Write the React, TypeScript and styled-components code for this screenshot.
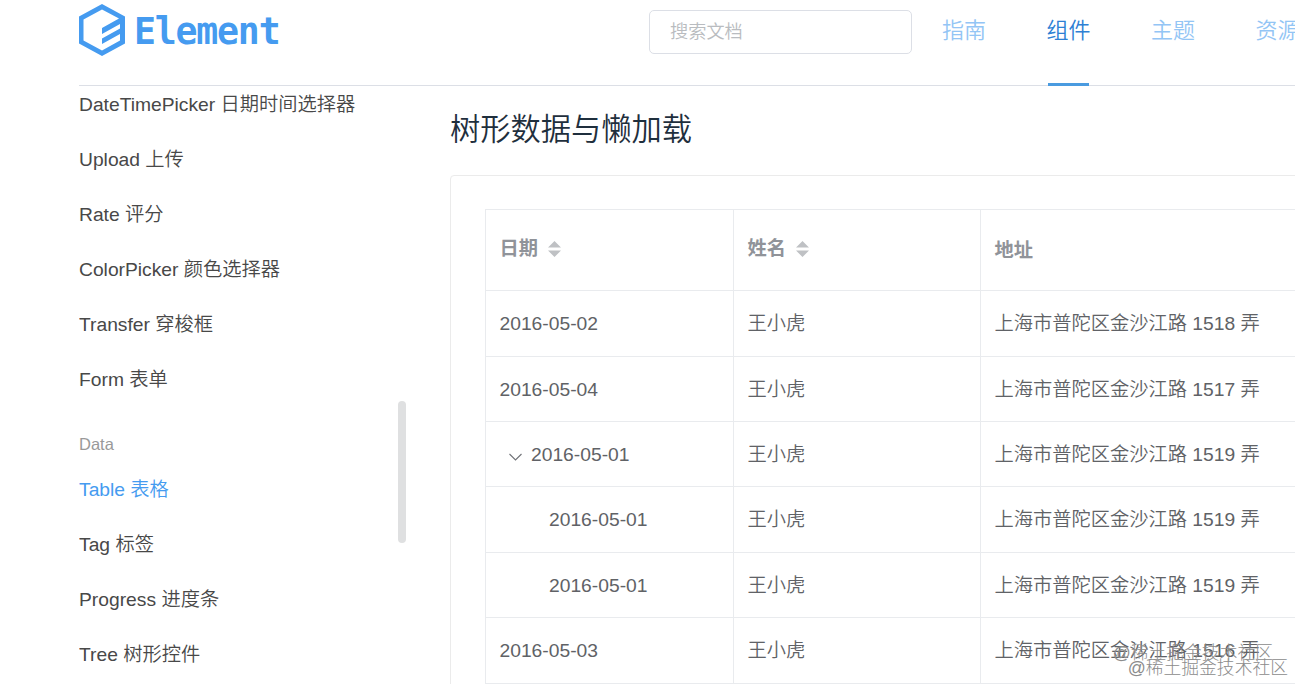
import React from "react";
import styled, { createGlobalStyle } from "styled-components";

const GlobalStyle = createGlobalStyle`
  * { box-sizing: border-box; }
  body {
    margin: 0;
    background: #fff;
    overflow: hidden;
    font-family: "Liberation Sans", "Noto Sans CJK SC", sans-serif;
    font-weight: 350;
    font-size: 19.25px;
    color: #606266;
  }
`;

const Page = styled.div`
  position: relative;
  width: 1295px;
  height: 684px;
  padding-left: 79px;
  overflow: hidden;
  display: flex;
  flex-direction: column;
`;

const Header = styled.header`
  flex: none;
  height: 86px;
  border-bottom: 1px solid #dcdfe6;
  display: flex;
  align-items: flex-start;
`;

const Logo = styled.div`
  display: flex;
  flex: none;
  width: 570px;
  padding-top: 4px;
`;

const LogoMark = styled.svg`
  flex: none;
  width: 46px;
  height: 52px;
  fill: #459bf0;
`;

const WordMark = styled.span`
  margin: 7px 0 0 9px;
  font: bold 36.5px/42px "DejaVu Sans Mono", monospace;
  letter-spacing: -1.2px;
  color: #459bf0;
`;

const Search = styled.input`
  flex: none;
  width: 263px;
  height: 44px;
  margin-top: 10px;
  padding: 0 20px;
  border: 1px solid #dcdfe6;
  border-radius: 5px;
  outline: none;
  font: inherit;
  font-size: 18.2px;
  &::placeholder { color: #b9bcc0; }
`;

const Nav = styled.nav`
  flex: none;
  display: flex;
  gap: 60.5px;
  margin-left: 30px;
  height: 86px;
`;

const NavItem = styled.a<{ $active?: boolean }>`
  position: relative;
  flex: none;
  width: 44px;
  font-size: 22px;
  line-height: 62px;
  white-space: nowrap;
  color: ${(p) => (p.$active ? "#2d80d4" : "#93c5f5")};
  &::after {
    content: "";
    display: ${(p) => (p.$active ? "block" : "none")};
    position: absolute;
    left: 1px;
    bottom: 0;
    width: 41px;
    height: 3px;
    background: #4a9be0;
  }
`;

const Body = styled.div`
  flex: 1;
  min-height: 0;
  display: flex;
  overflow: hidden;
`;

const Sidebar = styled.aside`
  position: relative;
  flex: none;
  width: 371px;
  height: 598px;
  overflow: hidden;
  display: flex;
  flex-direction: column;
`;

const MenuItem = styled.a<{ $active?: boolean }>`
  flex: none;
  height: 55px;
  line-height: 55px;
  white-space: nowrap;
  color: ${(p) => (p.$active ? "#459bf0" : "#484848")};
  &:first-child { margin-top: -9px; }
`;

const MenuGroup = styled.div`
  flex: none;
  height: 55px;
  padding-top: 19px;
  font-size: 16.5px;
  line-height: 36px;
  color: #999;
`;

const Scrollbar = styled.div`
  position: absolute;
  left: 319px;
  top: 315px;
  width: 8px;
  height: 142px;
  border-radius: 4px;
  background: #dfe0e1;
`;

const Content = styled.main`
  flex: none;
  width: 960px;
`;

const Title = styled.h3`
  margin: 0;
  height: 89px;
  font-size: 30.25px;
  font-weight: inherit;
  line-height: 88px;
  color: #1f2f3d;
`;

const Demo = styled.section`
  height: 600px;
  padding: 33px 34px;
  border: 1px solid #ebebeb;
  border-radius: 4px;
`;

const Table = styled.div`
  width: 960px;
  border: 1px solid #e9ebee;
`;

const Row = styled.div<{ $head?: boolean }>`
  display: grid;
  grid-template-columns: 248px 247px 460px;
  height: ${(p) => (p.$head ? "81.46px" : "65.35px")};
  border-bottom: 1px solid #e9ebee;
  font-weight: ${(p) => (p.$head ? 700 : "inherit")};
  line-height: 32px;
  color: ${(p) => (p.$head ? "#909399" : "#606266")};
`;

const Cell = styled.div<{ $indent?: number }>`
  display: flex;
  align-items: center;
  padding-top: 1.4px;
  padding-left: ${(p) => 13.5 + (p.$indent ?? 0)}px;
  border-right: 1px solid #e9ebee;
  white-space: nowrap;
`;

const HeadLabel = styled.span<{ $plain?: boolean }>`
  display: inline-flex;
  align-items: center;
  gap: 10px;
  padding-bottom: ${(p) => (p.$plain ? 0 : 3)}px;
`;

const Chevron = styled.svg`
  width: 13px;
  height: 8px;
  margin: 3px 9.5px 0 0;
  fill: none;
  stroke: #707277;
  stroke-width: 1.1;
`;

const Sort = styled.svg`
  width: 13px;
  height: 16px;
  margin-bottom: 1px;
  fill: #bfc1c4;
`;

const Watermark = styled.span<{ $right: number; $bottom: number }>`
  position: absolute;
  right: ${(p) => p.$right}px;
  bottom: ${(p) => p.$bottom}px;
  font-size: 17.8px;
  font-weight: 300;
  line-height: 24px;
  white-space: nowrap;
  color: #8c8c8c;
`;

const SortIcon = () => (
  <Sort viewBox="0 0 13 16">
    <path d="M6.5 0 13 6.5H0zM6.5 16 0 9.5H13z" />
  </Sort>
);

const before = ["DateTimePicker 日期时间选择器", "Upload 上传", "Rate 评分", "ColorPicker 颜色选择器", "Transfer 穿梭框", "Form 表单"];
const data = ["Table 表格", "Tag 标签", "Progress 进度条", "Tree 树形控件"];
const rows = [
  { date: "2016-05-02", no: 1518 },
  { date: "2016-05-04", no: 1517 },
  { date: "2016-05-01", no: 1519, indent: 9, open: true },
  { date: "2016-05-01", no: 1519, indent: 49.5 },
  { date: "2016-05-01", no: 1519, indent: 49.5 },
  { date: "2016-05-03", no: 1516 },
];

export default function App() {
  return (
    <Page>
      <GlobalStyle />
      <Header>
        <Logo>
          <LogoMark viewBox="0 0 46 52">
            <path
              fillRule="evenodd"
              d="M23 0 46 12.5V39.5L23 52 0 39.5V12.5zM23 5.5 4.5 15.5V36.5L23 46.5 41 36.5V30L23 40V34.5L41 24.5V20L23 30V24L40 14.5z"
            />
          </LogoMark>
          <WordMark>Element</WordMark>
        </Logo>
        <Search placeholder="搜索文档" />
        <Nav>
          {["指南", "组件", "主题", "资源"].map((label) => (
            <NavItem key={label} $active={label === "组件"}>{label}</NavItem>
          ))}
        </Nav>
      </Header>
      <Body>
        <Sidebar>
          {before.map((label) => <MenuItem key={label}>{label}</MenuItem>)}
          <MenuGroup>Data</MenuGroup>
          {data.map((label, i) => <MenuItem key={label} $active={i === 0}>{label}</MenuItem>)}
          <Scrollbar />
        </Sidebar>
        <Content>
          <Title>树形数据与懒加载</Title>
          <Demo>
            <Table>
              <Row $head>
                <Cell><HeadLabel>日期<SortIcon /></HeadLabel></Cell>
                <Cell><HeadLabel>姓名<SortIcon /></HeadLabel></Cell>
                <Cell><HeadLabel $plain>地址</HeadLabel></Cell>
              </Row>
              {rows.map((row, i) => (
                <Row key={i}>
                  <Cell $indent={row.indent}>
                    {row.open && <Chevron viewBox="0 0 13 8"><path d="M.5 1 6.5 7l6-6" /></Chevron>}
                    {row.date}
                  </Cell>
                  <Cell>王小虎</Cell>
                  <Cell>上海市普陀区金沙江路 {row.no} 弄</Cell>
                </Row>
              ))}
            </Table>
          </Demo>
        </Content>
      </Body>
      <Watermark $right={22} $bottom={19}>@稀土掘金技术社区</Watermark>
      <Watermark $right={7} $bottom={4}>@稀土掘金技术社区</Watermark>
    </Page>
  );
}
